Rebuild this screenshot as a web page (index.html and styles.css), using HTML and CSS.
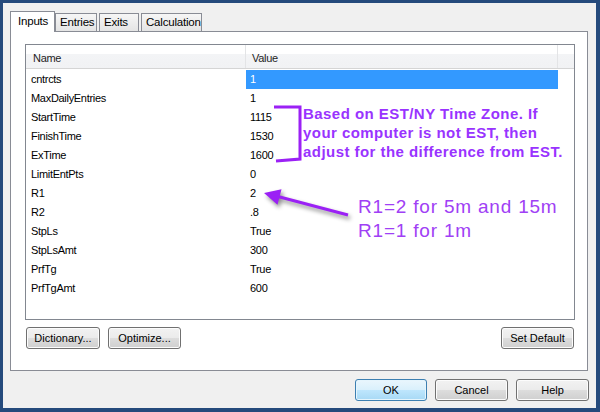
FILE: index.html
```html
<!DOCTYPE html>
<html lang="en">
<head>
    <meta charset="UTF-8">
    <title>Strategy Properties</title>
    <link rel="stylesheet" href="styles.css">
</head>
<body>
    <div class="window">
        <div class="tabs">
            <div class="tab active tab-inputs">Inputs</div>
            <div class="tab tab-entries">Entries</div>
            <div class="tab tab-exits">Exits</div>
            <div class="tab tab-calc">Calculation</div>
        </div>

        <div class="panel">
            <div class="list">
                <div class="list-head">
                    <div class="head-name">Name</div>
                    <div class="head-value">Value</div>
                    <div class="head-fill"></div>
                </div>
                <div class="row selected"><span class="cell-name">cntrcts</span><span class="cell-value">1</span></div>
                <div class="row"><span class="cell-name">MaxDailyEntries</span><span class="cell-value">1</span></div>
                <div class="row"><span class="cell-name">StartTime</span><span class="cell-value">1115</span></div>
                <div class="row"><span class="cell-name">FinishTime</span><span class="cell-value">1530</span></div>
                <div class="row"><span class="cell-name">ExTime</span><span class="cell-value">1600</span></div>
                <div class="row"><span class="cell-name">LimitEntPts</span><span class="cell-value">0</span></div>
                <div class="row"><span class="cell-name">R1</span><span class="cell-value">2</span></div>
                <div class="row"><span class="cell-name">R2</span><span class="cell-value">.8</span></div>
                <div class="row"><span class="cell-name">StpLs</span><span class="cell-value">True</span></div>
                <div class="row"><span class="cell-name">StpLsAmt</span><span class="cell-value">300</span></div>
                <div class="row"><span class="cell-name">PrfTg</span><span class="cell-value">True</span></div>
                <div class="row"><span class="cell-name">PrfTgAmt</span><span class="cell-value">600</span></div>
            </div>
            <div class="panel-buttons">
                <button class="btn btn-dict">Dictionary...</button>
                <button class="btn btn-opt">Optimize...</button>
                <button class="btn btn-default">Set Default</button>
            </div>
        </div>

        <div class="dialog-buttons">
            <button class="btn btn-ok">OK</button>
            <button class="btn">Cancel</button>
            <button class="btn">Help</button>
        </div>

        <!-- annotations drawn over the dialog -->
        <svg class="bracket" width="40" height="70" viewBox="0 0 40 70">
            <path d="M3 2 L29 2 L29 54 L5 56" fill="none" stroke="#9b21f5" stroke-width="3"/>
        </svg>
        <div class="note note-time">Based on EST/NY Time Zone. If<br>your computer is not EST, then<br>adjust for the difference from EST.</div>

        <svg class="arrow" width="100" height="40" viewBox="260 185 100 40">
            <line x1="348" y1="215" x2="276" y2="196" stroke="#9b21f5" stroke-width="3"/>
            <polygon points="264,193 281.5,189.3 277.5,204.7" fill="#9b21f5"/>
        </svg>
        <div class="note note-r1">R1=2 for 5m and 15m<br>R1=1 for 1m</div>
    </div>
</body>
</html>
```

FILE: styles.css
```css
body {
    margin: 0;
    font-family: "Liberation Sans", Arial, sans-serif;
    font-size: 11px;
    color: #000;
}

.window {
    position: relative;
    width: 600px;
    height: 412px;
    box-sizing: border-box;
    background-color: #f0f0f0;
    border: 3px solid #254a7c;
    border-right-width: 4px;
    border-bottom-width: 4px;
    padding: 8px 8px 0 7px;
}

/* tab strip */
.tabs {
    display: flex;
    align-items: flex-end;
    height: 20px;
    font-size: 11.5px;
    letter-spacing: -0.2px;
}

.tab {
    box-sizing: border-box;
    height: 18px;
    padding: 2px 0 0 4px;
    border: 1px solid #898c95;
    border-bottom: none;
    background: linear-gradient(#f6f6f6, #e4e4e4);
    margin-right: 2px;
    white-space: nowrap;
    overflow: hidden;
}

.tab.active {
    position: relative;
    z-index: 1;
    height: 21px;
    margin-bottom: -1px;
    padding: 3px 0 0 7px;
    background: #fff;
    margin-right: 0;
}

.tab-inputs { width: 45px; }
.tab-entries { width: 42px; }
.tab-exits { width: 40px; }
.tab-calc { width: 61px; }

.panel {
    box-sizing: border-box;
    width: 578px;
    height: 340px;
    border: 1px solid #898c95;
    background-color: #fff;
    padding: 12px 0 0 14px;
}

/* list view */
.list {
    box-sizing: border-box;
    width: 550px;
    height: 276px;
    border: 1px solid #828790;
    letter-spacing: -0.3px;
}

.list-head {
    display: flex;
    height: 24px;
    box-sizing: border-box;
    border-bottom: 1px solid #d5d5d5;
    background: linear-gradient(#fff 0, #fff 9px, #f3f4f6 9px, #f1f2f4 100%);
    margin-bottom: 1px;
}

.head-name,
.head-value {
    box-sizing: border-box;
    padding: 7px 0 0 7px;
    border-right: 1px solid #e3e4e6;
    color: #1e1e1e;
}

.head-name { width: 220px; }
.head-value { width: 312px; padding-left: 6px; }
.head-fill { flex: 1; }

.row {
    display: flex;
    height: 19px;
    line-height: 19px;
}

.cell-name {
    width: 220px;
    box-sizing: border-box;
    padding-left: 5px;
}

.cell-value {
    width: 312px;
    box-sizing: border-box;
    padding-left: 4px;
}

.row.selected .cell-value {
    background-color: #3399ff;
    color: #fff;
}

/* buttons */
.btn {
    box-sizing: border-box;
    height: 22px;
    padding: 0;
    font-family: "Liberation Sans", Arial, sans-serif;
    font-size: 11px;
    color: #000;
    border: 1px solid #707070;
    border-radius: 3px;
    background: linear-gradient(#f2f2f2 0, #ebebeb 50%, #dddddd 51%, #cfcfcf 100%);
    box-shadow: inset 0 0 0 1px #fcfcfc;
    width: 73px;
}

.panel-buttons {
    display: flex;
    gap: 8px;
    margin-top: 7px;
    padding-left: 1px;
    width: 548px;
}

.btn-dict { width: 74px; }
.btn-default { margin-left: auto; }

.dialog-buttons {
    display: flex;
    justify-content: flex-end;
    gap: 8px;
    margin-top: 8px;
    margin-right: -1px;
}

.btn.btn-ok {
    width: 72px;
    border-color: #3c7fb1;
    background: linear-gradient(#eaf6fd 0, #d9f0fc 50%, #bee6fd 51%, #a7d9f5 100%);
    box-shadow: inset 0 0 0 1px #e5f5fd;
}

/* annotations */
.bracket {
    position: absolute;
    left: 268px;
    top: 102px;
}

.note {
    position: absolute;
    color: #9933ff;
    white-space: nowrap;
}

.note-time {
    left: 300px;
    top: 101px;
    font-weight: bold;
    font-size: 15px;
    line-height: 19px;
    letter-spacing: 0.45px;
}

.arrow {
    position: absolute;
    left: 257px;
    top: 182px;
    filter: drop-shadow(2px 3px 2px rgba(0, 0, 0, 0.45));
}

.note-r1 {
    left: 355px;
    top: 192px;
    font-size: 19px;
    line-height: 24px;
    letter-spacing: 0.8px;
    color: #a040f5;
}
```
